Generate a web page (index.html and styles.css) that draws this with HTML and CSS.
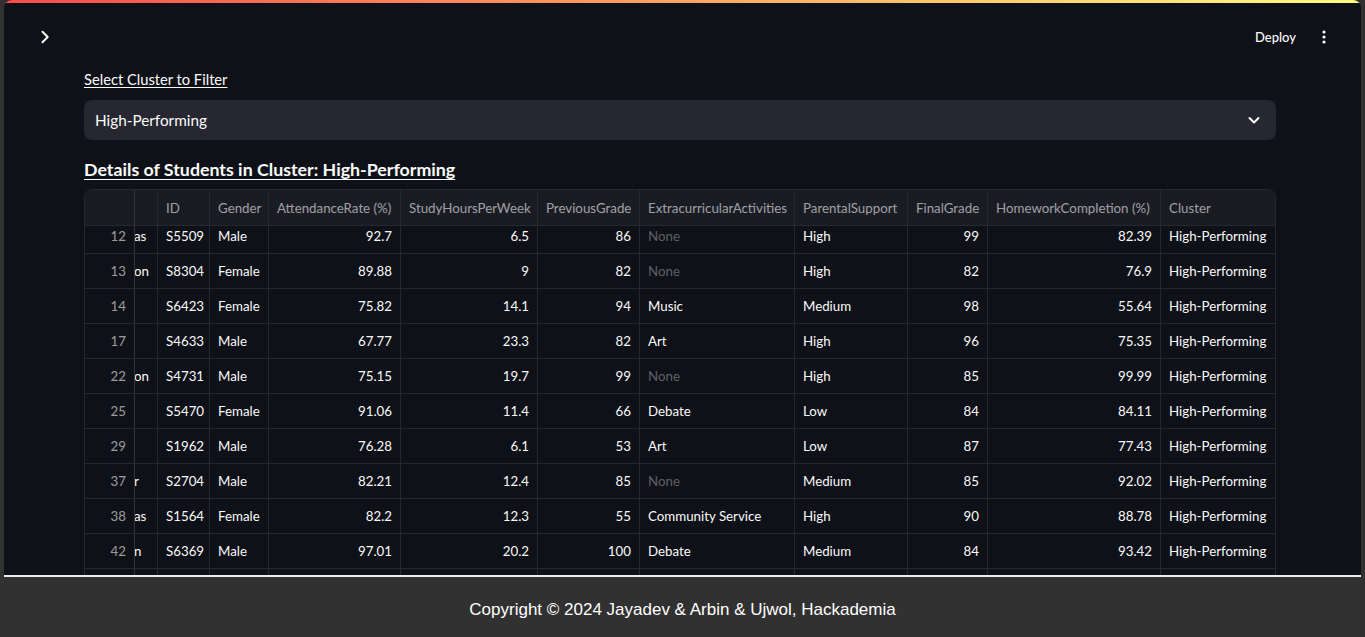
FILE: index.html
```html
<!DOCTYPE html>
<html lang="en">
<head>
<meta charset="utf-8">
<title>Student Clusters</title>
<link rel="stylesheet" href="styles.css">
</head>
<body>
<div class="app">
  <div class="decoration"></div>
  <header class="topbar">
    <button class="icon-btn sidebar-toggle" aria-label="Open sidebar">
      <svg width="16" height="16" viewBox="0 0 16 16"><path d="M5.5 2.8 L10.7 8 L5.5 13.2" fill="none" stroke="#fafafa" stroke-width="2" stroke-linecap="round" stroke-linejoin="round"/></svg>
    </button>
    <div class="topbar-actions">
      <button class="deploy">Deploy</button>
      <button class="icon-btn menu" aria-label="Menu">
        <svg width="16" height="16" viewBox="0 0 16 16"><circle cx="8" cy="3" r="1.6" fill="#fafafa"/><circle cx="8" cy="8" r="1.6" fill="#fafafa"/><circle cx="8" cy="13" r="1.6" fill="#fafafa"/></svg>
      </button>
    </div>
  </header>

  <main class="content">
    <label class="field-label">Select Cluster to Filter</label>
    <div class="select">
      <span>High-Performing</span>
      <svg width="16" height="16" viewBox="0 0 16 16"><path d="M3.5 6 L8 10.5 L12.5 6" fill="none" stroke="#fafafa" stroke-width="2" stroke-linecap="round" stroke-linejoin="round"/></svg>
    </div>
    <h3 class="section-title">Details of Students in Cluster: High-Performing</h3>

    <div class="grid">
      <div class="row head">
        <div class="c idx"></div>
        <div class="c"></div>
        <div class="c">ID</div>
        <div class="c">Gender</div>
        <div class="c">AttendanceRate (%)</div>
        <div class="c">StudyHoursPerWeek</div>
        <div class="c">PreviousGrade</div>
        <div class="c">ExtracurricularActivities</div>
        <div class="c">ParentalSupport</div>
        <div class="c">FinalGrade</div>
        <div class="c">HomeworkCompletion (%)</div>
        <div class="c">Cluster</div>
      </div>
      <div class="body">
        <div class="scroll">
          <div class="row"><div class="c idx">12</div><div class="c nm"><span class="cut">as</span></div><div class="c">S5509</div><div class="c">Male</div><div class="c num">92.7</div><div class="c num">6.5</div><div class="c num">86</div><div class="c null">None</div><div class="c">High</div><div class="c num">99</div><div class="c num">82.39</div><div class="c">High-Performing</div></div>
          <div class="row"><div class="c idx">13</div><div class="c nm"><span class="cut">on</span></div><div class="c">S8304</div><div class="c">Female</div><div class="c num">89.88</div><div class="c num">9</div><div class="c num">82</div><div class="c null">None</div><div class="c">High</div><div class="c num">82</div><div class="c num">76.9</div><div class="c">High-Performing</div></div>
          <div class="row"><div class="c idx">14</div><div class="c nm"></div><div class="c">S6423</div><div class="c">Female</div><div class="c num">75.82</div><div class="c num">14.1</div><div class="c num">94</div><div class="c">Music</div><div class="c">Medium</div><div class="c num">98</div><div class="c num">55.64</div><div class="c">High-Performing</div></div>
          <div class="row"><div class="c idx">17</div><div class="c nm"></div><div class="c">S4633</div><div class="c">Male</div><div class="c num">67.77</div><div class="c num">23.3</div><div class="c num">82</div><div class="c">Art</div><div class="c">High</div><div class="c num">96</div><div class="c num">75.35</div><div class="c">High-Performing</div></div>
          <div class="row"><div class="c idx">22</div><div class="c nm"><span class="cut">on</span></div><div class="c">S4731</div><div class="c">Male</div><div class="c num">75.15</div><div class="c num">19.7</div><div class="c num">99</div><div class="c null">None</div><div class="c">High</div><div class="c num">85</div><div class="c num">99.99</div><div class="c">High-Performing</div></div>
          <div class="row"><div class="c idx">25</div><div class="c nm"></div><div class="c">S5470</div><div class="c">Female</div><div class="c num">91.06</div><div class="c num">11.4</div><div class="c num">66</div><div class="c">Debate</div><div class="c">Low</div><div class="c num">84</div><div class="c num">84.11</div><div class="c">High-Performing</div></div>
          <div class="row"><div class="c idx">29</div><div class="c nm"></div><div class="c">S1962</div><div class="c">Male</div><div class="c num">76.28</div><div class="c num">6.1</div><div class="c num">53</div><div class="c">Art</div><div class="c">Low</div><div class="c num">87</div><div class="c num">77.43</div><div class="c">High-Performing</div></div>
          <div class="row"><div class="c idx">37</div><div class="c nm"><span class="cut">r</span></div><div class="c">S2704</div><div class="c">Male</div><div class="c num">82.21</div><div class="c num">12.4</div><div class="c num">85</div><div class="c null">None</div><div class="c">Medium</div><div class="c num">85</div><div class="c num">92.02</div><div class="c">High-Performing</div></div>
          <div class="row"><div class="c idx">38</div><div class="c nm"><span class="cut">as</span></div><div class="c">S1564</div><div class="c">Female</div><div class="c num">82.2</div><div class="c num">12.3</div><div class="c num">55</div><div class="c">Community Service</div><div class="c">High</div><div class="c num">90</div><div class="c num">88.78</div><div class="c">High-Performing</div></div>
          <div class="row"><div class="c idx">42</div><div class="c nm"><span class="cut">n</span></div><div class="c">S6369</div><div class="c">Male</div><div class="c num">97.01</div><div class="c num">20.2</div><div class="c num">100</div><div class="c">Debate</div><div class="c">Medium</div><div class="c num">84</div><div class="c num">93.42</div><div class="c">High-Performing</div></div>
          <div class="row"><div class="c idx">45</div><div class="c nm"></div><div class="c">S3390</div><div class="c">Female</div><div class="c num">88.4</div><div class="c num">15.2</div><div class="c num">91</div><div class="c">Music</div><div class="c">High</div><div class="c num">93</div><div class="c num">90.1</div><div class="c">High-Performing</div></div>
        </div>
      </div>
    </div>
  </main>
</div>

<footer class="footer">
  <div class="footer-inner">Copyright © 2024 Jayadev &amp; Arbin &amp; Ujwol, Hackademia</div>
</footer>
</body>
</html>
```

FILE: styles.css
```css
* { box-sizing: border-box; }

html, body {
  margin: 0;
  height: 100%;
}

body {
  background: #313131;
  overflow: hidden;
  font-family: Lato, "Noto Sans", sans-serif;
  color: #fafafa;
}

.app {
  margin: 0 4px;
  height: 100%;
  background: #0e1117;
  border-radius: 8px 8px 0 0;
  overflow: hidden;
}

.decoration {
  height: 3px;
  background: linear-gradient(90deg, #ff4b4b, #fffd80);
}

.topbar {
  height: 67px;
  display: flex;
  align-items: center;
  justify-content: space-between;
  padding: 0 29px 0 33px;
}

.icon-btn {
  background: none;
  border: 0;
  padding: 0;
  width: 16px;
  height: 16px;
  display: flex;
  align-items: center;
  justify-content: center;
  cursor: pointer;
}

.topbar-actions {
  display: flex;
  align-items: center;
  gap: 20px;
}

.deploy {
  background: none;
  border: 0;
  color: #fafafa;
  font-family: Lato, sans-serif;
  font-size: 13px;
  font-weight: 500;
  padding: 0;
}

.content {
  padding: 0 85px 0 80px;
}

.field-label {
  display: block;
  font-size: 14.7px;
  line-height: 19px;
  text-decoration: underline;
  text-underline-offset: 2px;
  margin-bottom: 11px;
}

.select {
  height: 40px;
  background: #262730;
  border-radius: 8px;
  display: flex;
  align-items: center;
  justify-content: space-between;
  padding: 0 14px 0 11px;
  font-size: 15.3px;
}

.section-title {
  margin: 17px 0 8px;
  font-size: 17.8px;
  line-height: 24px;
  font-weight: 700;
  text-decoration: underline;
  text-underline-offset: 3px;
}

.grid {
  border: 1px solid #262831;
  border-radius: 8px 8px 0 0;
  font-size: 13.3px;
  overflow: hidden;
}

.row {
  display: grid;
  grid-template-columns: 50px 23px 52px 59px 132px 137px 102px 155px 113px 80px 173px 113px;
  height: 35px;
  border-bottom: 1px solid #262831;
}

.row.head {
  height: 36px;
  background: #1a1c24;
  color: rgba(250, 250, 250, 0.6);
  position: relative;
  z-index: 1;
}

.c {
  border-right: 1px solid #262831;
  padding: 0 8px;
  display: flex;
  align-items: center;
  white-space: nowrap;
  overflow: hidden;
}

.c:last-child { border-right: 0; }

.c.num { justify-content: flex-end; }

.c.idx {
  justify-content: flex-end;
  color: rgba(250, 250, 250, 0.6);
  border-right-color: #33353e;
}

.c.null { color: rgba(250, 250, 250, 0.35); }

.c.nm { padding: 0 0 0 1px; }

.cut { margin-left: -2px; }

.body {
  height: 400px;
  overflow: hidden;
}

.scroll { margin-top: -7px; }

.footer {
  position: fixed;
  left: 0;
  right: 0;
  bottom: 0;
  height: 62px;
  background: #313131;
}

.footer-inner {
  margin: 0 4px;
  height: 100%;
  border-top: 2px solid #ececec;
  display: flex;
  align-items: center;
  justify-content: center;
  font-family: "Liberation Sans", Arial, sans-serif;
  font-size: 17px;
  color: #ffffff;
  padding-top: 5px;
}
```
